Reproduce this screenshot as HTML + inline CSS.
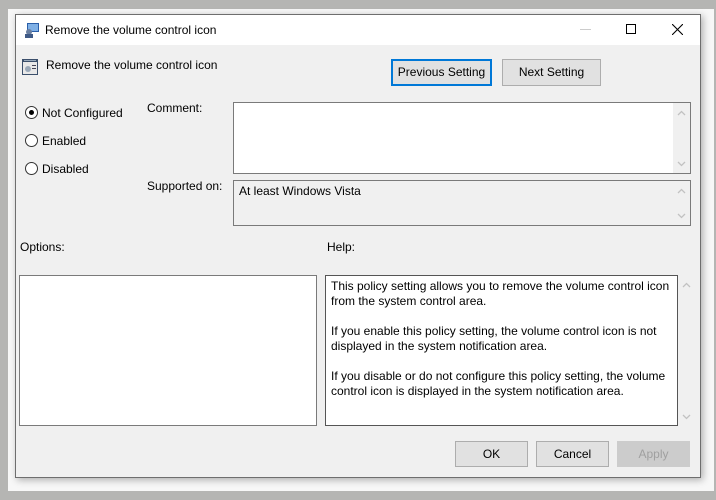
<!DOCTYPE html>
<html><head><style>
*{box-sizing:border-box;margin:0;padding:0}
body{width:716px;height:500px;background:#b5b5b3;position:relative;overflow:hidden;font-family:"Liberation Sans",sans-serif;font-size:12px;color:#000}
.a{position:absolute}
.frame{left:8px;top:9px;width:706px;height:482px;background:#f7f7f7}
.win{left:15px;top:14px;width:686px;height:464px;background:#f0f0f0;border:1px solid #6e6e6e;box-shadow:2px 2px 7px rgba(0,0,0,.3)}
.title{left:16px;top:15px;width:684px;height:30px;background:#fff}
.box{border:1px solid #7a7a7a;background:#fff}
.btn{border:1px solid #adadad;background:#e1e1e1;text-align:center;line-height:24px}
.radio{width:13px;height:13px;border:1px solid #333;border-radius:50%;background:#fff}
</style></head><body>
<svg width="0" height="0" style="position:absolute"><defs>
<symbol id="up" viewBox="0 0 9 6"><path d="M1 5L4.5 1.5L8 5" fill="none" stroke="#c2c2c2" stroke-width="1.3"/></symbol>
<symbol id="dn" viewBox="0 0 9 6"><path d="M1 1L4.5 4.5L8 1" fill="none" stroke="#c2c2c2" stroke-width="1.3"/></symbol>
</defs></svg>
<div class="a frame"></div>
<div class="a win"></div>
<div class="a title"></div>
<svg class="a" style="left:24px;top:22px" width="16" height="16"><rect x="3" y="1" width="12" height="9" fill="#2a5ea8"/><rect x="4" y="2" width="10" height="7" fill="#7fb0e6"/><circle cx="5" cy="10" r="3" fill="#6a7fa0"/><rect x="1" y="12" width="8" height="4" fill="#3f5a86"/></svg>
<div class="a" style="left:45px;top:23px">Remove the volume control icon</div>
<div class="a" style="left:580px;top:29px;width:11px;height:1px;background:#ccc"></div>
<div class="a" style="left:626px;top:24px;width:10px;height:10px;border:1px solid #000"></div>
<svg class="a" style="left:672px;top:24px" width="11" height="11"><path d="M0 0L11 11M11 0L0 11" stroke="#000" stroke-width="1.1"/></svg>
<svg class="a" style="left:22px;top:59px" width="16" height="16"><rect x="0" y="0" width="16" height="16" fill="#3b4f6b"/><rect x="1" y="3" width="14" height="12" fill="#e8e8e8"/><rect x="2" y="1" width="12" height="1" fill="#9ab"/><circle cx="6" cy="10" r="3" fill="#9aa8b8"/><rect x="10" y="6" width="4" height="1" fill="#445"/><rect x="10" y="9" width="4" height="1" fill="#445"/></svg>
<div class="a" style="left:46px;top:58px">Remove the volume control icon</div>
<div class="a btn" style="left:391px;top:59px;width:101px;height:27px;border:2px solid #0078d7;line-height:23px">Previous Setting</div>
<div class="a btn" style="left:502px;top:59px;width:99px;height:27px">Next Setting</div>
<div class="a radio" style="left:25px;top:106px"></div><div class="a" style="left:29px;top:110px;width:5px;height:5px;border-radius:50%;background:#000"></div>
<div class="a" style="left:42px;top:106px">Not Configured</div>
<div class="a radio" style="left:25px;top:134px"></div><div class="a" style="left:42px;top:134px">Enabled</div>
<div class="a radio" style="left:25px;top:162px"></div><div class="a" style="left:42px;top:162px">Disabled</div>
<div class="a" style="left:147px;top:101px">Comment:</div>
<div class="a" style="left:147px;top:179px">Supported on:</div>
<div class="a box" style="left:233px;top:102px;width:458px;height:72px"></div>
<div class="a" style="left:673px;top:103px;width:17px;height:70px;background:#f0f0f0"></div>
<svg class="a" style="left:677px;top:110px" width="9" height="6"><use href="#up"/></svg>
<svg class="a" style="left:677px;top:161px" width="9" height="6"><use href="#dn"/></svg>
<div class="a box" style="left:233px;top:180px;width:458px;height:46px;background:#f0f0f0"></div>
<div class="a" style="left:239px;top:184px">At least Windows Vista</div>
<svg class="a" style="left:677px;top:188px" width="9" height="6"><use href="#up"/></svg>
<svg class="a" style="left:677px;top:213px" width="9" height="6"><use href="#dn"/></svg>
<div class="a" style="left:20px;top:240px">Options:</div>
<div class="a" style="left:327px;top:240px">Help:</div>
<div class="a box" style="left:19px;top:275px;width:298px;height:151px"></div>
<div class="a box" style="left:325px;top:275px;width:353px;height:151px;border-color:#555;padding:3px 5px;line-height:15px">This policy setting allows you to remove the volume control icon from the system control area.<br><br>If you enable this policy setting, the volume control icon is not displayed in the system notification area.<br><br>If you disable or do not configure this policy setting, the volume control icon is displayed in the system notification area.</div>
<svg class="a" style="left:682px;top:282px" width="9" height="6"><use href="#up"/></svg>
<svg class="a" style="left:682px;top:414px" width="9" height="6"><use href="#dn"/></svg>
<div class="a btn" style="left:455px;top:441px;width:73px;height:26px">OK</div>
<div class="a btn" style="left:536px;top:441px;width:73px;height:26px">Cancel</div>
<div class="a btn" style="left:617px;top:441px;width:73px;height:26px;border-color:#ccc;background:#ccc;color:#a0a0a0">Apply</div>
</body></html>
